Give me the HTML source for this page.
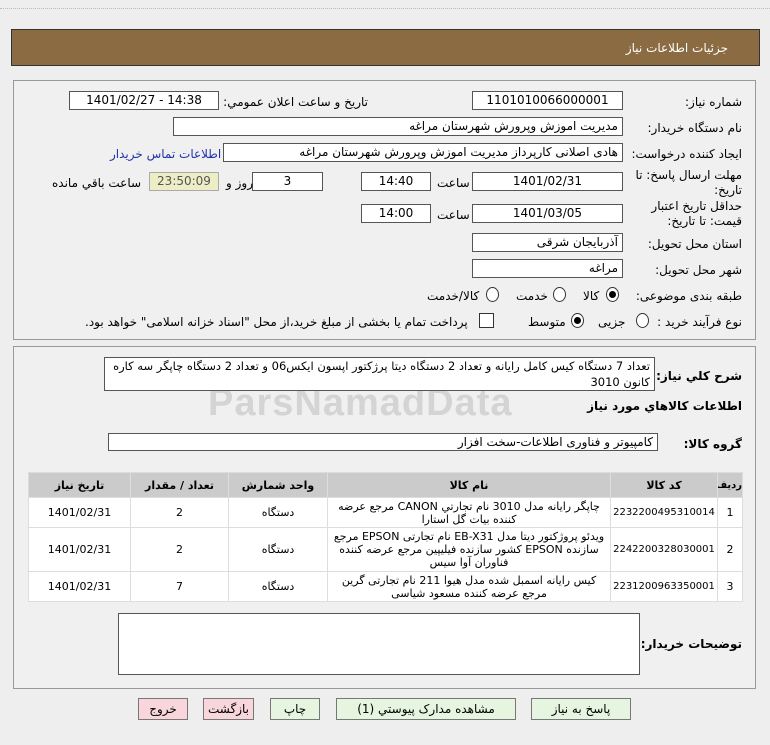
<!DOCTYPE html>
<html><head><meta charset="utf-8"><style>
body{margin:0;width:770px;height:745px;background:#eeeeee;font-family:"DejaVu Sans",sans-serif;font-size:11px;color:#000;position:relative;overflow:hidden}
.a{position:absolute}
.box{position:absolute;background:#fff;border:1px solid #555;box-sizing:border-box;padding:0 4px;line-height:17px;font-size:12px;white-space:nowrap;overflow:hidden}
.c{text-align:center}
.r{text-align:right;direction:rtl}
.lbl{position:absolute;direction:rtl;font-size:12px;white-space:nowrap}
.panel{position:absolute;border:1px solid #999;background:#f0f0f0}
.rad{position:absolute;width:11px;height:13px;border:1px solid #333;border-radius:50%;background:#fff}
.rad.on::after{content:"";position:absolute;left:2px;top:3px;width:7px;height:7px;border-radius:50%;background:#000}
table{border-collapse:collapse;table-layout:fixed;position:absolute;left:28px;top:472px;width:714px;font-size:11px;direction:rtl;line-height:13px}
td,th{border:1px solid #ddd;text-align:center;padding:0 2px;overflow:hidden}
th{background:#cbcbcb;height:24px;font-weight:bold}
td{background:#fff}
td.k{font-size:10px;padding:0}
.btn{position:absolute;top:698px;height:22px;border:1px solid #777;box-sizing:border-box;text-align:center;line-height:20px;font-size:12px}
</style></head><body>
<div class="a" style="left:0;top:8px;width:770px;border-top:1px dotted #bbb"></div>
<div class="a" style="left:11px;top:29px;width:747px;height:35px;background:#8b6b42;border:1px solid #333;"></div>
<div class="lbl" style="right:42px;top:41px;color:#fff;font-size:12px">جزئیات اطلاعات نیاز</div>

<div class="panel" style="left:13px;top:80px;width:741px;height:258px"></div>
<div class="lbl" style="right:28px;top:95px">شماره نیاز:</div>
<div class="box c" style="left:472px;top:91px;width:151px;height:19px">1101010066000001</div>
<div class="lbl" style="right:402px;top:95px">تاریخ و ساعت اعلان عمومي:</div>
<div class="box c" style="left:69px;top:91px;width:150px;height:19px">1401/02/27 - 14:38</div>

<div class="lbl" style="right:28px;top:121px">نام دستگاه خریدار:</div>
<div class="box r" style="left:173px;top:117px;width:450px;height:19px">مدیریت اموزش وپرورش شهرستان مراغه</div>

<div class="lbl" style="right:28px;top:147px">ایجاد کننده درخواست:</div>
<div class="box r" style="left:223px;top:143px;width:400px;height:19px">هادی اصلانی کارپرداز مدیریت اموزش وپرورش شهرستان مراغه</div>
<div class="lbl" style="left:110px;top:147px;color:#2233aa">اطلاعات تماس خریدار</div>

<div class="lbl" style="right:28px;top:168px;width:115px;text-align:right;line-height:15px;white-space:normal">مهلت ارسال پاسخ: تا تاریخ:</div>
<div class="box c" style="left:472px;top:172px;width:151px;height:19px">1401/02/31</div>
<div class="lbl" style="left:437px;top:176px">ساعت</div>
<div class="box c" style="left:361px;top:172px;width:70px;height:19px">14:40</div>
<div class="box c" style="left:252px;top:172px;width:71px;height:19px">3</div>
<div class="lbl" style="left:226px;top:176px">روز و</div>
<div class="box c" style="left:149px;top:172px;width:70px;height:19px;background:#eeeec6;border-color:#aaa;color:#555">23:50:09</div>
<div class="lbl" style="left:52px;top:176px">ساعت باقي مانده</div>

<div class="lbl" style="right:28px;top:199px;width:115px;text-align:right;line-height:15px;white-space:normal">حداقل تاریخ اعتبار قیمت: تا تاریخ:</div>
<div class="box c" style="left:472px;top:204px;width:151px;height:19px">1401/03/05</div>
<div class="lbl" style="left:437px;top:208px">ساعت</div>
<div class="box c" style="left:361px;top:204px;width:70px;height:19px">14:00</div>

<div class="lbl" style="right:28px;top:237px">استان محل تحویل:</div>
<div class="box r" style="left:472px;top:233px;width:151px;height:19px">آذربایجان شرقی</div>
<div class="lbl" style="right:28px;top:263px">شهر محل تحویل:</div>
<div class="box r" style="left:472px;top:259px;width:151px;height:19px">مراغه</div>

<div class="lbl" style="right:28px;top:289px">طبقه بندی موضوعی:</div>
<div class="rad on" style="left:606px;top:287px"></div><div class="lbl" style="left:583px;top:289px">کالا</div>
<div class="rad" style="left:553px;top:287px"></div><div class="lbl" style="left:516px;top:289px">خدمت</div>
<div class="rad" style="left:486px;top:287px"></div><div class="lbl" style="left:427px;top:289px">کالا/خدمت</div>

<div class="lbl" style="right:28px;top:315px">نوع فرآیند خرید :</div>
<div class="rad" style="left:636px;top:313px"></div><div class="lbl" style="left:598px;top:315px">جزیی</div>
<div class="rad on" style="left:571px;top:313px"></div><div class="lbl" style="left:528px;top:315px">متوسط</div>
<div class="a" style="left:479px;top:313px;width:13px;height:13px;border:1px solid #333;background:#fff"></div>
<div class="lbl" style="left:85px;top:315px">پرداخت تمام یا بخشی از مبلغ خرید،از محل "اسناد خزانه اسلامی" خواهد بود.</div>

<div class="panel" style="left:13px;top:346px;width:741px;height:341px"></div>
<div class="a" style="left:208px;top:382px;font-size:38px;font-weight:bold;color:#d4d4d4;font-family:'Liberation Sans',sans-serif;letter-spacing:1px">ParsNamadData</div>
<div class="lbl" style="right:28px;top:369px;font-weight:bold">شرح کلي نیاز:</div>
<div class="box r" style="left:104px;top:357px;width:551px;height:34px;line-height:16px;font-size:11.5px;white-space:normal">تعداد 7 دستگاه کیس کامل رایانه و تعداد 2 دستگاه دیتا پرژکتور اپسون ایکس06 و تعداد 2 دستگاه چاپگر سه کاره کانون 3010</div>
<div class="lbl" style="right:28px;top:399px;font-weight:bold">اطلاعات کالاهاي مورد نیاز</div>
<div class="lbl" style="right:28px;top:437px;font-weight:bold">گروه کالا:</div>
<div class="box r" style="left:108px;top:433px;width:550px;height:18px;line-height:16px">کامپیوتر و فناوری اطلاعات-سخت افزار</div>

<table>
<colgroup><col style="width:25px"><col style="width:107px"><col style="width:283px"><col style="width:99px"><col style="width:98px"><col style="width:102px"></colgroup>
<tr><th style="font-size:10px;padding:0">ردیف</th><th>کد کالا</th><th>نام کالا</th><th>واحد شمارش</th><th>تعداد / مقدار</th><th>تاریخ نیاز</th></tr>
<tr style="height:30px"><td>1</td><td class="k">2232200495310014</td><td>چاپگر رایانه مدل 3010 نام تجارتي CANON مرجع عرضه کننده بیات گل استارا</td><td>دستگاه</td><td>2</td><td>1401/02/31</td></tr>
<tr style="height:44px"><td>2</td><td class="k">2242200328030001</td><td>ویدئو پروژکتور دیتا مدل EB-X31 نام تجارتی EPSON مرجع سازنده EPSON کشور سازنده فیلیپین مرجع عرضه کننده فناوران آوا سیس</td><td>دستگاه</td><td>2</td><td>1401/02/31</td></tr>
<tr style="height:30px"><td>3</td><td class="k">2231200963350001</td><td>کیس رایانه اسمبل شده مدل هیوا 211 نام تجارتی گرین مرجع عرضه کننده مسعود شیاسی</td><td>دستگاه</td><td>7</td><td>1401/02/31</td></tr>
</table>

<div class="lbl" style="right:28px;top:637px;font-weight:bold">توضیحات خریدار:</div>
<div class="box" style="left:118px;top:613px;width:522px;height:62px"></div>

<div class="btn" style="left:531px;width:100px;background:#e6f5e0">پاسخ به نیاز</div>
<div class="btn" style="left:336px;width:180px;background:#e6f5e0">مشاهده مدارک پیوستي (1)</div>
<div class="btn" style="left:270px;width:50px;background:#e6f5e0">چاپ</div>
<div class="btn" style="left:203px;width:51px;background:#f8d6dc">بازگشت</div>
<div class="btn" style="left:138px;width:50px;background:#f8d6dc">خروج</div>
</body></html>
